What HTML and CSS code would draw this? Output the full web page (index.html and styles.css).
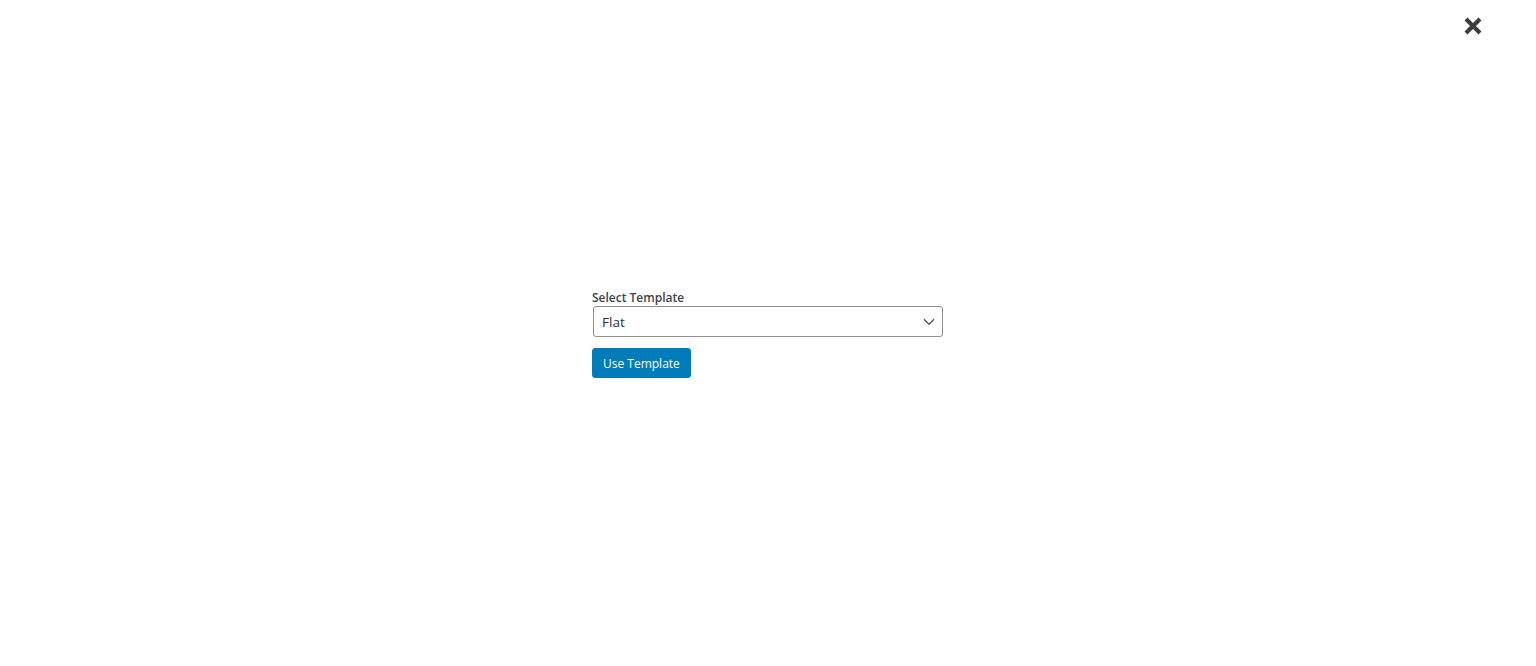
FILE: index.html
```html
<!DOCTYPE html>
<html lang="en">
<head>
<meta charset="utf-8">
<title>Select Template</title>
<link rel="stylesheet" href="styles.css">
</head>
<body>
<div class="modal">
  <button class="close" aria-label="Close">
    <svg viewBox="0 0 20 20" width="20" height="20"><path d="M3 3 L17 17 M17 3 L3 17" stroke="#3c3c3c" stroke-width="4.2" stroke-linecap="butt"/></svg>
  </button>
  <div class="panel">
    <label class="label" for="tpl">Select Template</label>
    <div class="select-wrap">
      <select id="tpl" class="select"><option>Flat</option></select>
      <svg class="chev" viewBox="0 0 12 8" width="12" height="8"><path d="M1 1.2 L6 6.2 L11 1.2" fill="none" stroke="#50575e" stroke-width="1.4"/></svg>
    </div>
    <div class="actions"><button class="btn-primary">Use Template</button></div>
  </div>
</div>
</body>
</html>
```

FILE: styles.css
```css
html, body { margin: 0; padding: 0; background: #fff; }
body { font-family: "Open Sans", "Noto Sans", sans-serif; color: #3c434a; }
.modal { height: 666px; display: flex; align-items: center; justify-content: center; position: relative; }
.close { position: absolute; top: 16px; right: 53px; width: 20px; height: 20px; padding: 0; border: 0; background: none; cursor: pointer; }
.close svg { display: block; }
.panel { width: 352px; display: flex; flex-direction: column; margin-top: 3px; }
.label { font-size: 12px; font-weight: 600; color: #3c434a; line-height: 14px; margin-bottom: 1px; }
.select-wrap { position: relative; margin-left: 1px; width: 350px; }
.select { appearance: none; -webkit-appearance: none; width: 350px; height: 31px; box-sizing: border-box; border: 1px solid #8c8f94; border-radius: 3px; background: #fff; color: #2c3338; font-family: inherit; font-size: 13.5px; padding: 0 24px 0 8px; margin: 0; display: block; }
.chev { position: absolute; right: 8px; top: 12px; pointer-events: none; }
.actions { margin-top: 11px; }
.btn-primary { background: #007cba; color: #fff; border: 1px solid #007cba; border-radius: 3px; height: 30px; padding: 0 10px; font-family: inherit; font-size: 12px; cursor: pointer; }
```
